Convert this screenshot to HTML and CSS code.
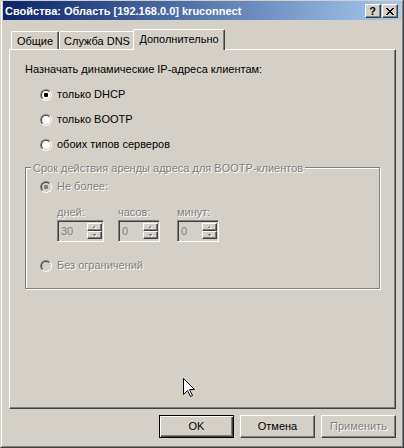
FILE: index.html
```html
<!DOCTYPE html>
<html lang="ru">
<head>
<meta charset="utf-8">
<title>Свойства</title>
<link rel="stylesheet" href="styles.css">
</head>
<body>
<div class="window">
  <div class="frame">
    <div class="caption">
      <span class="caption-title">Свойства: Область [192.168.0.0] kruconnect</span>
      <span class="cap-btns">
        <span class="cap-btn help">?</span>
        <span class="cap-btn close">
          <svg width="8" height="7" viewBox="0 0 8 7" shape-rendering="crispEdges"><path d="M0 0h2v1h-2zM6 0h2v1h-2zM1 1h2v1h-2zM5 1h2v1h-2zM2 2h4v1h-4zM3 3h2v1h-2zM2 4h4v1h-4zM1 5h2v1h-2zM5 5h2v1h-2zM0 6h2v1h-2zM6 6h2v1h-2z" fill="#000"/></svg>
        </span>
      </span>
    </div>
    <div class="content">
      <div class="tabs">
        <div class="tab t1">Общие</div>
        <div class="tab t2">Служба DNS</div>
        <div class="tab t3 active">Дополнительно</div>
      </div>
      <div class="panel">
        <div class="lead">Назначать динамические IP-адреса клиентам:</div>
        <div class="options">
          <div class="opt"><span class="radio"><span class="radio-in"><span class="dot"></span></span></span><span>только DHCP</span></div>
          <div class="opt"><span class="radio"><span class="radio-in"></span></span><span>только BOOTP</span></div>
          <div class="opt"><span class="radio"><span class="radio-in"></span></span><span>обоих типов серверов</span></div>
        </div>
        <div class="group">
          <span class="legend disabled">Срок действия аренды адреса для BOOTP-клиентов</span>
          <div class="opt"><span class="radio off"><span class="radio-in"><span class="dot"></span></span></span><span class="disabled">Не более:</span></div>
          <div class="spins">
            <div class="spin-col c1">
              <div class="spin-label disabled">дней:</div>
              <div class="edit"><span class="val">30</span><span class="updown"><span class="ud"><svg width="5" height="3" viewBox="0 0 5 3" shape-rendering="crispEdges"><path d="M2 0h1v1h-1zM1 1h3v1h-3z" fill="#808080"/><path d="M3 1h1v1h-1zM4 2h1v1h-1zM2 2h2v1h-2z" fill="#fff"/></svg></span><span class="ud"><svg width="5" height="3" viewBox="0 0 5 3" shape-rendering="crispEdges"><path d="M1 0h3v1h-3zM2 1h1v1h-1z" fill="#808080"/><path d="M4 1h1v1h-1zM3 2h1v1h-1z" fill="#fff"/></svg></span></span></div>
            </div>
            <div class="spin-col c2">
              <div class="spin-label disabled">часов:</div>
              <div class="edit"><span class="val">0</span><span class="updown"><span class="ud"><svg width="5" height="3" viewBox="0 0 5 3" shape-rendering="crispEdges"><path d="M2 0h1v1h-1zM1 1h3v1h-3z" fill="#808080"/><path d="M3 1h1v1h-1zM4 2h1v1h-1zM2 2h2v1h-2z" fill="#fff"/></svg></span><span class="ud"><svg width="5" height="3" viewBox="0 0 5 3" shape-rendering="crispEdges"><path d="M1 0h3v1h-3zM2 1h1v1h-1z" fill="#808080"/><path d="M4 1h1v1h-1zM3 2h1v1h-1z" fill="#fff"/></svg></span></span></div>
            </div>
            <div class="spin-col c3">
              <div class="spin-label disabled">минут:</div>
              <div class="edit"><span class="val">0</span><span class="updown"><span class="ud"><svg width="5" height="3" viewBox="0 0 5 3" shape-rendering="crispEdges"><path d="M2 0h1v1h-1zM1 1h3v1h-3z" fill="#808080"/><path d="M3 1h1v1h-1zM4 2h1v1h-1zM2 2h2v1h-2z" fill="#fff"/></svg></span><span class="ud"><svg width="5" height="3" viewBox="0 0 5 3" shape-rendering="crispEdges"><path d="M1 0h3v1h-3zM2 1h1v1h-1z" fill="#808080"/><path d="M4 1h1v1h-1zM3 2h1v1h-1z" fill="#fff"/></svg></span></span></div>
            </div>
          </div>
          <div class="opt opt-last"><span class="radio off"><span class="radio-in"></span></span><span class="disabled">Без ограничений</span></div>
        </div>
      </div>
      <div class="buttons">
        <button class="btn default">OK</button>
        <button class="btn">Отмена</button>
        <button class="btn disabled-btn"><span class="disabled">Применить</span></button>
      </div>
    </div>
  </div>
  <svg class="cursor" width="12" height="19" viewBox="0 0 12 19"><path d="M0.5 0.5V16.5L4.5 12.5L7.5 18.5L9.5 17.5L6.5 11.5H11.5Z" fill="#fff" stroke="#000" stroke-width="1" stroke-linejoin="miter"/></svg>
</div>
</body>
</html>
```

FILE: styles.css
```css
* { box-sizing: border-box; }

body {
  margin: 0;
  background: #d4d0c8;
  font-family: "Liberation Sans", Arial, sans-serif;
  font-size: 11px;
  line-height: 13px;
  color: #000;
}

.window {
  position: relative;
  width: 404px;
  height: 448px;
  padding-top: 1px;
  background: #d4d0c8;
  border-left: 1px solid #d4d0c8;
  border-right: 1px solid #404040;
  border-bottom: 1px solid #404040;
}

.frame {
  height: 100%;
  padding: 0 1px 1px 1px;
  border-left: 1px solid #fff;
  border-right: 1px solid #808080;
  border-bottom: 1px solid #808080;
  display: flex;
  flex-direction: column;
}

.caption {
  height: 19px;
  display: flex;
  align-items: flex-start;
  padding: 0 3px 0 2px;
  background: linear-gradient(to right, #0a246a, #a6caf0);
  color: #fff;
}

.caption-title {
  font-weight: bold;
  margin-top: 4px;
  white-space: nowrap;
}

.cap-btns {
  margin-left: auto;
  margin-top: 3px;
  display: flex;
}

.cap-btn {
  width: 16px;
  height: 14px;
  background: #d4d0c8;
  border: 1px solid;
  border-color: #fff #404040 #404040 #fff;
  box-shadow: inset -1px -1px 0 #808080;
  display: flex;
  align-items: center;
  justify-content: center;
  color: #000;
}

.cap-btn.help {
  margin-right: 1px;
  font-weight: bold;
  font-size: 11px;
  line-height: 12px;
  padding-right: 1px;
}

.cap-btn.close svg { display: block; margin-right: 1px; }

.content {
  flex: 1;
  padding: 9px 5px 0 6px;
}

.tabs {
  display: flex;
  align-items: flex-end;
  height: 20px;
  padding-left: 2px;
}

.tab {
  height: 18px;
  padding-top: 3px;
  text-align: center;
  white-space: nowrap;
  background: #d4d0c8;
  border-top: 1px solid #fff;
  border-left: 1px solid #fff;
  border-right: 1px solid #404040;
  box-shadow: inset -1px 0 0 #808080;
  border-radius: 2px 2px 0 0;
}

.t1 { width: 48px; }
.t2 { width: 76px; }
.t3 { width: 92px; }

.tab.active {
  position: relative;
  z-index: 1;
  height: 21px;
  margin: 0 -2px -1px -2px;
}

.panel {
  height: 360px;
  padding: 13px 0 0 15px;
  border-top: 1px solid #fff;
  border-left: 1px solid #fff;
  border-right: 1px solid #404040;
  border-bottom: 1px solid #404040;
  box-shadow: inset -1px -1px 0 #808080;
}

.options {
  padding-left: 15px;
}

.opt {
  display: flex;
  align-items: flex-start;
  height: 13px;
  margin-top: 12px;
  white-space: nowrap;
}

.radio {
  width: 12px;
  height: 12px;
  margin-top: 1px;
  margin-right: 5px;
  border-radius: 50%;
  border: 1px solid;
  border-color: #808080 #fff #fff #808080;
  flex: none;
}

.radio-in {
  width: 10px;
  height: 10px;
  border-radius: 50%;
  border: 1px solid;
  border-color: #404040 #d4d0c8 #d4d0c8 #404040;
  background: #fff;
  display: flex;
  align-items: center;
  justify-content: center;
}

.dot {
  width: 4px;
  height: 4px;
  border-radius: 1px;
  background: #000;
}

.radio.off .radio-in { background: #d4d0c8; }
.radio.off .dot { background: #808080; }

.disabled {
  color: #808080;
  text-shadow: 1px 1px 0 #fff;
}

.group {
  position: relative;
  width: 355px;
  height: 122px;
  margin-top: 16px;
  padding: 0 0 0 14px;
  border: 1px solid #808080;
  box-shadow: 1px 1px 0 #fff, inset 1px 1px 0 #fff;
}

.group > .opt:first-of-type { margin-top: 12px; }

.legend {
  position: absolute;
  top: -6px;
  left: 5px;
  padding: 0 2px;
  background: #d4d0c8;
  white-space: nowrap;
}

.spins {
  display: flex;
  margin-top: 13px;
  padding-left: 17px;
}

.spin-col.c1 { width: 47px; }
.spin-col.c2 { width: 42px; margin-left: 14px; }
.spin-col.c3 { width: 42px; margin-left: 17px; }

.edit {
  margin-top: 1px;
  height: 22px;
  display: flex;
  padding: 2px 1px 2px 2px;
  border: 1px solid;
  border-color: #808080 #fff #fff #808080;
  box-shadow: inset 1px 1px 0 #404040, inset -1px -1px 0 #d4d0c8;
  background: #d4d0c8;
}

.val {
  color: #808080;
  padding: 2px 0 0 1px;
}

.updown {
  margin-left: auto;
  width: 15px;
  display: flex;
  flex-direction: column;
}

.ud {
  height: 9px;
  display: flex;
  align-items: center;
  justify-content: center;
  background: #d4d0c8;
  border: 1px solid;
  border-color: #fff #404040 #404040 #fff;
  box-shadow: inset -1px -1px 0 #808080;
}

.ud svg { display: block; }

.opt-last { margin-top: 17px; }

.buttons {
  display: flex;
  justify-content: flex-end;
  gap: 6px;
  margin-top: 6px;
}

.btn {
  width: 75px;
  height: 23px;
  padding: 0;
  margin: 0;
  font: inherit;
  line-height: 13px;
  color: #000;
  background: #d4d0c8;
  border: 1px solid;
  border-color: #fff #404040 #404040 #fff;
  box-shadow: inset -1px -1px 0 #808080;
  border-radius: 0;
}

.btn.default {
  border-color: #000;
  box-shadow: inset 1px 1px 0 #fff, inset -1px -1px 0 #404040, inset -2px -2px 0 #808080;
}

.cursor {
  position: absolute;
  left: 182px;
  top: 378px;
  display: block;
}
```
